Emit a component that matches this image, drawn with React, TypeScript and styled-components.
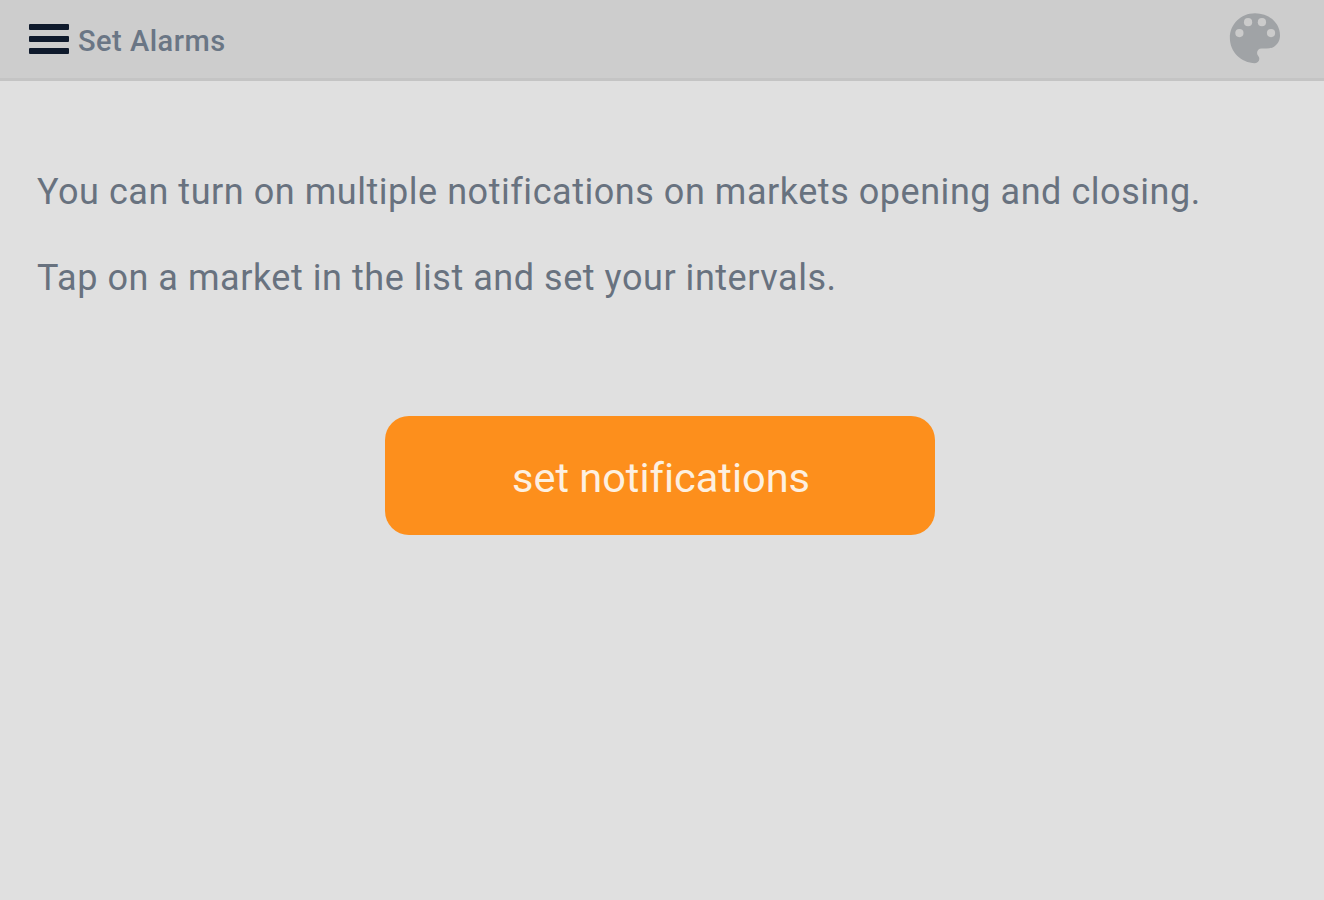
import React from 'react'
import styled, { createGlobalStyle } from 'styled-components'

const GlobalStyle = createGlobalStyle`
  html, body {
    margin: 0;
    padding: 0;
    background: #e0e0e0;
    font-family: Roboto, "Liberation Sans", sans-serif;
  }
`

export default function App() {
  return (
    <Page>
      <GlobalStyle />
      <Toolbar>
        <TitleGroup>
          <MenuIcon>
            <MenuBar />
            <MenuBar />
            <MenuBar />
          </MenuIcon>
          <Title>Set Alarms</Title>
        </TitleGroup>
        <PaletteIcon viewBox="0 0 24 24" aria-label="Theme">
          <path
            fill="#a0a3a6"
            d="M12 .6C5.4.6.4 5.7.4 12c0 6.3 5.2 11.6 11.6 11.6 1.1 0 2-.9 2-2 0-.5-.2-1-.5-1.35-.35-.4-.55-.85-.55-1.35 0-1.1.9-2 2-2h2.4c3.6 0 6.2-2.6 6.2-6.1C23.55 5 18.4.6 12 .6z"
          />
          <circle cx="4.8" cy="9.7" r="1.9" fill="#cbcbcb" />
          <circle cx="8.8" cy="4.7" r="1.9" fill="#cbcbcb" />
          <circle cx="15.2" cy="4.7" r="1.9" fill="#cbcbcb" />
          <circle cx="19.4" cy="9.7" r="1.9" fill="#cbcbcb" />
        </PaletteIcon>
      </Toolbar>
      <Content>
        <Message>You can turn on multiple notifications on markets opening and closing.</Message>
        <Message>Tap on a market in the list and set your intervals.</Message>
        <ButtonRow>
          <ActionButton type="button">set notifications</ActionButton>
        </ButtonRow>
      </Content>
    </Page>
  )
}

const Page = styled.div`
  width: 1324px;
  height: 900px;
  overflow: hidden;
  background: #e0e0e0;
`

const Toolbar = styled.header`
  box-sizing: border-box;
  height: 81px;
  padding: 0 43px 0 29px;
  display: flex;
  align-items: center;
  justify-content: space-between;
  background: #cdcdcd;
  border-bottom: 3px solid #c4c4c4;
`

const TitleGroup = styled.div`
  display: flex;
  align-items: center;
  gap: 9px;
`

const MenuIcon = styled.div`
  width: 40px;
  height: 30px;
  display: flex;
  flex-direction: column;
  justify-content: space-between;
`

const MenuBar = styled.span`
  display: block;
  height: 6px;
  background: #0f1a2c;
  border-radius: 1px;
`

const Title = styled.h1`
  margin: 3px 0 0;
  font-size: 29px;
  line-height: 34px;
  font-weight: 500;
  letter-spacing: 0.5px;
  color: #6a7685;
`

const PaletteIcon = styled.svg`
  width: 52px;
  height: 52px;
  margin-top: -3px;
`

const Content = styled.main`
  padding: 91px 37px 0;
`

const Message = styled.p`
  margin: 0 0 46px;
  font-size: 36px;
  line-height: 40px;
  font-weight: 400;
  letter-spacing: 0.54px;
  color: #68727f;
`

const ButtonRow = styled.div`
  display: flex;
  justify-content: center;
  padding-top: 72px;
  padding-right: 4px;
`

const ActionButton = styled.button`
  width: 550px;
  height: 119px;
  padding: 3px 0 0 2px;
  border: none;
  border-radius: 24px;
  background: #fd8f1c;
  color: #fdf0e0;
  font-family: Roboto, "Liberation Sans", sans-serif;
  font-size: 41.5px;
  font-weight: 400;
  font-variant-ligatures: none;
`
